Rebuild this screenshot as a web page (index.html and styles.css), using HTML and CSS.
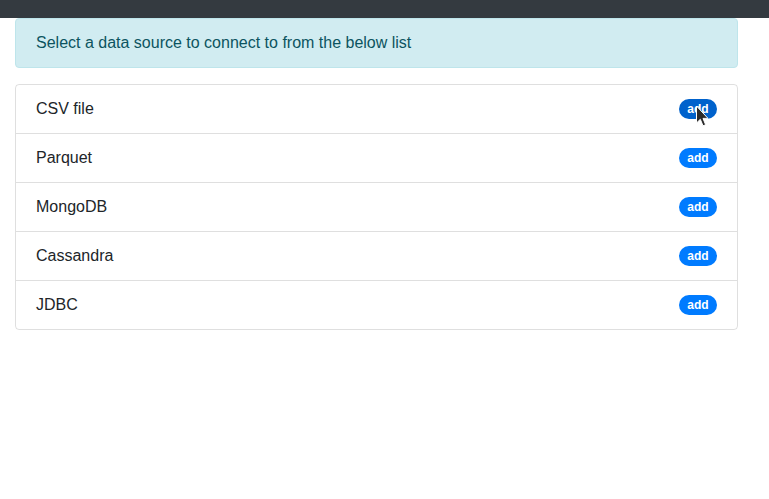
FILE: index.html
```html
<!DOCTYPE html>
<html>
<head>
<meta charset="utf-8">
<link rel="stylesheet" href="styles.css">
</head>
<body>
<div class="topbar"></div>
<main class="content">
  <div class="alert">Select a data source to connect to from the below list</div>
  <ul class="list">
    <li class="item"><span>CSV file</span><span class="badge hover">add</span></li>
    <li class="item"><span>Parquet</span><span class="badge">add</span></li>
    <li class="item"><span>MongoDB</span><span class="badge">add</span></li>
    <li class="item"><span>Cassandra</span><span class="badge">add</span></li>
    <li class="item"><span>JDBC</span><span class="badge">add</span></li>
  </ul>
</main>
<svg class="cursor" width="14" height="23" viewBox="0 0 14 23"><path d="M1.5 1 L1.5 18 L5.3 14.3 L8 20.8 L10.6 19.7 L8 13.4 L13 13.4 Z" fill="#2b2b2b" stroke="#fff" stroke-width="1" stroke-linejoin="round"/></svg>
</body>
</html>
```
FILE: styles.css
```css
* { box-sizing: border-box; }
html, body { margin: 0; padding: 0; background: #fff; }
body {
  font-family: "Liberation Sans", Arial, sans-serif;
  font-size: 16px;
  line-height: 24px;
  color: #212529;
  position: relative;
}
.topbar { height: 18px; background: #343a40; }
.content { margin-left: 15px; width: 723px; }
.alert {
  background: #d1ecf1;
  border: 1px solid #bee5eb;
  color: #0c5460;
  border-radius: 4px;
  padding: 12px 20px;
  margin-bottom: 16px;
}
.list {
  list-style: none;
  margin: 0;
  padding: 0;
  border: 1px solid rgba(0,0,0,.125);
  border-radius: 4px;
}
.item {
  display: flex;
  justify-content: space-between;
  align-items: center;
  padding: 12px 20px;
  border-top: 1px solid rgba(0,0,0,.125);
}
.item:first-child { border-top: none; }
.badge {
  background: #007bff;
  color: #fff;
  font-size: 12px;
  font-weight: bold;
  line-height: 12px;
  padding: 4px 8.4px;
  border-radius: 10px;
}
.badge.hover { background: #0062cc; }
.cursor { position: absolute; left: 695px; top: 105px; }
```
